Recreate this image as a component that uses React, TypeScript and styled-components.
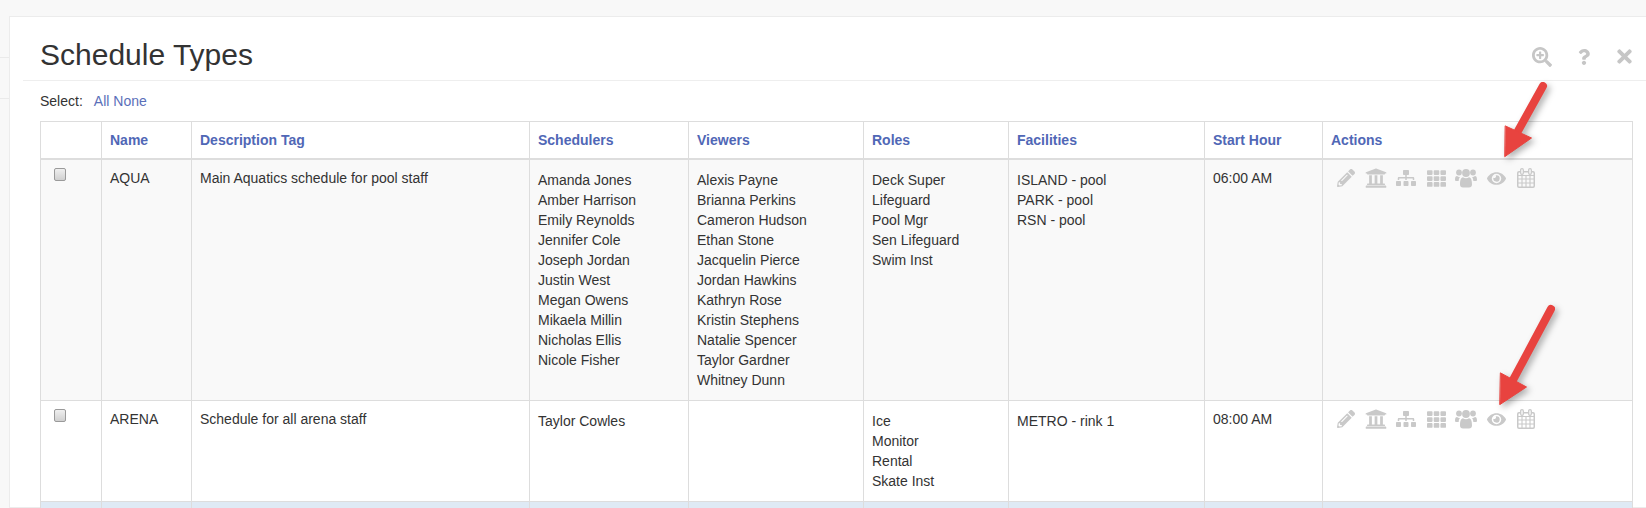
import React from "react";
import styled, { createGlobalStyle } from "styled-components";
import {
  FaPencilAlt,
  FaUniversity,
  FaSitemap,
  FaTh,
  FaEye,
  FaSearchPlus,
  FaQuestion,
  FaTimes,
} from "react-icons/fa";

const Global = createGlobalStyle`
  html, body { margin: 0; padding: 0; height: 508px; overflow: hidden; background: #f8f8f8; }
  body { font-family: "Liberation Sans", Arial, sans-serif; font-size: 14px; line-height: 20px; color: #333; }
`;

const Page = styled.div`
  position: relative;
  display: flex;
  width: 1646px;
  height: 508px;
  overflow: hidden;
`;
const Side = styled.div`
  flex: 0 0 9px;
  padding-top: 57px;
`;
const SideItem = styled.div`
  height: 40px;
  border-top: 1px solid #eaeaea;
  border-bottom: 1px solid #eaeaea;
`;
const Panel = styled.main`
  flex: 1;
  margin-top: 16px;
  background: #fff;
  border: 1px solid #ececec;
  border-right: 0;
  padding-left: 13px;
`;
const PanelHeader = styled.header`
  display: flex;
  align-items: center;
  justify-content: space-between;
  height: 63px;
  border-bottom: 1px solid #eee;
  padding-left: 17px;
`;
const Title = styled.h1`
  margin: 0;
  font-size: 30px;
  line-height: 40px;
  font-weight: 400;
  color: #333;
  position: relative;
  top: 6px;
`;
const Tools = styled.div`
  display: flex;
  align-items: center;
  color: #c6c6c6;
  padding-right: 1px;
  position: relative;
  top: 8px;
`;
const Tool = styled.span<{ $w: number }>`
  display: flex;
  justify-content: center;
  width: ${(p) => p.$w}px;
`;
const SelectRow = styled.div`
  height: 40px;
  padding: 10px 0 0 17px;
  box-sizing: border-box;
  color: #333;
`;
const SelectLabel = styled.span`
  margin-right: 11px;
`;
const Link = styled.a`
  color: #5a6fb9;
`;
const Table = styled.table`
  width: 1592px;
  margin-left: 17px;
  table-layout: fixed;
  border-collapse: collapse;
`;
const HeadCell = styled.th`
  height: 37px;
  box-sizing: border-box;
  padding: 8px;
  text-align: left;
  font-size: 14px;
  font-weight: 700;
  color: #5067b6;
  border: 1px solid #ddd;
  border-bottom: 2px solid #ddd;
  vertical-align: bottom;
`;
const Row = styled.tr<{ $bg: string }>`
  background: ${(p) => p.$bg};
`;
const Cell = styled.td`
  padding: 8px;
  border: 1px solid #ddd;
  vertical-align: top;
  color: #333;
`;
const Check = styled.input`
  appearance: none;
  display: block;
  box-sizing: border-box;
  margin: 0 0 0 5px;
  width: 12px;
  height: 13px;
  border: 1px solid #9a9a9a;
  border-radius: 2px;
  background: linear-gradient(#efefef, #d0d0d0);
`;
const List = styled.ul`
  list-style: none;
  margin: 2px 0;
  padding: 0;
`;
const Actions = styled.div`
  display: flex;
  color: #c9c9c9;
`;
const Action = styled.span`
  flex: 0 0 30px;
  height: 20px;
  display: flex;
  align-items: center;
  justify-content: center;
`;
const ArrowLayer = styled.svg`
  position: absolute;
  inset: 0;
  width: 1646px;
  height: 508px;
  pointer-events: none;
  filter: drop-shadow(3px 3px 3px rgba(0, 0, 0, 0.3));
`;

const Calendar = () => (
  <svg width="18" height="20" viewBox="0 0 18 20" fill="none" stroke="currentColor">
    <rect x="0.75" y="3.75" width="16.5" height="15.5" rx="1.2" strokeWidth="1.5" />
    <path d="M1 7.5h16M1 11h16M1 15h16M5 7v12M9 7v12M13 7v12" strokeWidth="1.1" />
    <rect x="3.7" y="0.7" width="2.6" height="5.6" rx="1.2" fill="#fff" strokeWidth="1.3" />
    <rect x="11.7" y="0.7" width="2.6" height="5.6" rx="1.2" fill="#fff" strokeWidth="1.3" />
  </svg>
);

const Group = () => (
  <svg width="22" height="20" viewBox="0 0 22 20" fill="currentColor">
    <circle cx="4" cy="4.5" r="2.9" />
    <circle cx="18" cy="4.5" r="2.9" />
    <circle cx="11" cy="5" r="3.9" />
    <path d="M0 11.5C0 9 .8 8 2 8c.8.7 1.8 1 3 .9-.8 1-1.3 2.3-1.3 4.1H1.500C.5 13 0 12.500 0 11.500z" />
    <path d="M22 11.5C22 9 21.2 8 20 8c-.8.7-1.8 1-3 .9.8 1 1.3 2.3 1.3 4.1h2.200c1 0 1.500-.5 1.500-1.500z" />
    <path d="M5 16.5c0-4 .8-7 3-7.200 1.700 1.300 4.300 1.300 6 0 2.200.2 3 3.200 3 7.200 0 2-1.200 3-3 3H8c-1.800 0-3-1-3-3z" />
  </svg>
);

const ActionIcons = () => (
  <Actions>
    <Action><FaPencilAlt size={18} /></Action>
    <Action><FaUniversity size={22} /></Action>
    <Action><FaSitemap size={20} /></Action>
    <Action><FaTh size={19} /></Action>
    <Action><Group /></Action>
    <Action><FaEye size={19} /></Action>
    <Action><Calendar /></Action>
  </Actions>
);

const people = (s: string) => s.split("|");
const rows = [
  {
    name: "AQUA",
    tag: "Main Aquatics schedule for pool staff",
    schedulers: people("Amanda Jones|Amber Harrison|Emily Reynolds|Jennifer Cole|Joseph Jordan|Justin West|Megan Owens|Mikaela Millin|Nicholas Ellis|Nicole Fisher"),
    viewers: people("Alexis Payne|Brianna Perkins|Cameron Hudson|Ethan Stone|Jacquelin Pierce|Jordan Hawkins|Kathryn Rose|Kristin Stephens|Natalie Spencer|Taylor Gardner|Whitney Dunn"),
    roles: people("Deck Super|Lifeguard|Pool Mgr|Sen Lifeguard|Swim Inst"),
    facilities: people("ISLAND - pool|PARK - pool|RSN - pool"),
    start: "06:00 AM",
    bg: "#f9f9f9",
  },
  {
    name: "ARENA",
    tag: "Schedule for all arena staff",
    schedulers: ["Taylor Cowles"],
    viewers: [] as string[],
    roles: people("Ice|Monitor|Rental|Skate Inst"),
    facilities: ["METRO - rink 1"],
    start: "08:00 AM",
    bg: "#ffffff",
  },
];

const columns = [61, 90, 338, 159, 175, 145, 196, 118, 310];
const headers = ["", "Name", "Description Tag", "Schedulers", "Viewers", "Roles", "Facilities", "Start Hour", "Actions"];

const Names = ({ items }: { items: string[] }) => (
  <List>
    {items.map((n) => (
      <li key={n}>{n}</li>
    ))}
  </List>
);

export default function App() {
  return (
    <Page>
      <Global />
      <Side>
        <SideItem />
      </Side>
      <Panel>
        <PanelHeader>
          <Title>Schedule Types</Title>
          <Tools>
            <Tool $w={43}><FaSearchPlus size={20} /></Tool>
            <Tool $w={41}><FaQuestion size={16} /></Tool>
            <Tool $w={41}><FaTimes size={21} /></Tool>
          </Tools>
        </PanelHeader>
        <SelectRow>
          <SelectLabel>Select:</SelectLabel>
          <Link>All</Link> <Link>None</Link>
        </SelectRow>
        <Table>
          <colgroup>
            {columns.map((w, i) => (
              <col key={i} width={w} />
            ))}
          </colgroup>
          <thead>
            <tr>
              {headers.map((h, i) => (
                <HeadCell key={i}>{h}</HeadCell>
              ))}
            </tr>
          </thead>
          <tbody>
            {rows.map((r) => (
              <Row key={r.name} $bg={r.bg}>
                <Cell><Check type="checkbox" /></Cell>
                <Cell>{r.name}</Cell>
                <Cell>{r.tag}</Cell>
                <Cell><Names items={r.schedulers} /></Cell>
                <Cell><Names items={r.viewers} /></Cell>
                <Cell><Names items={r.roles} /></Cell>
                <Cell><Names items={r.facilities} /></Cell>
                <Cell>{r.start}</Cell>
                <Cell><ActionIcons /></Cell>
              </Row>
            ))}
            <Row $bg="#dfeaf5">
              {headers.map((_, i) => (
                <Cell key={i}>&nbsp;</Cell>
              ))}
            </Row>
          </tbody>
        </Table>
      </Panel>
      <ArrowLayer viewBox="0 0 1646 508">
        <g fill="#e8433f" stroke="#e8433f" strokeLinecap="round" strokeLinejoin="round">
          <line x1="1543" y1="86" x2="1518" y2="131" strokeWidth="8" />
          <polygon points="1505.5,126 1531.5,138 1505,156.5" strokeWidth="1" />
          <line x1="1551" y1="309" x2="1513" y2="380" strokeWidth="8" />
          <polygon points="1500.7,373 1526.5,387 1500,404.5" strokeWidth="1" />
        </g>
      </ArrowLayer>
    </Page>
  );
}
